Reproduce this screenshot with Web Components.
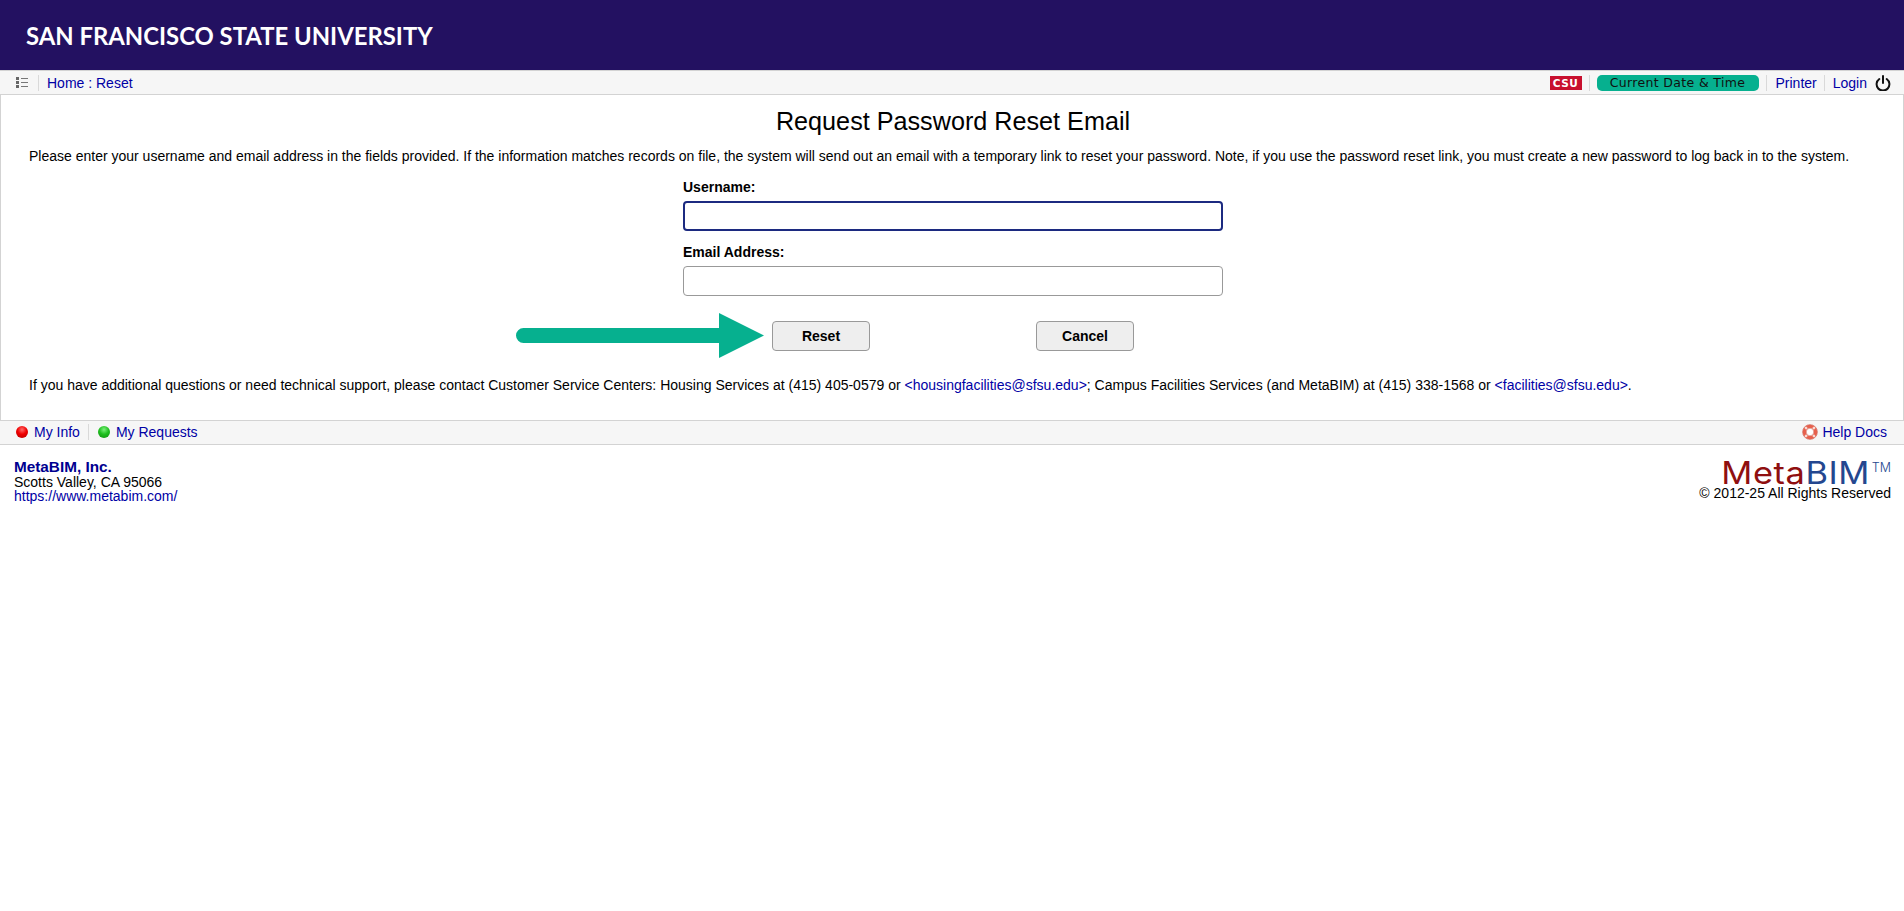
<!DOCTYPE html>
<html lang="en">
<head>
<meta charset="utf-8">
<title>Request Password Reset Email</title>
<style>
  html, body { margin: 0; padding: 0; background: #fff; }
  body { font: 14px/16px "Liberation Sans", Arial, sans-serif; color: #000; }
</style>
</head>
<body>
<site-banner>SAN FRANCISCO STATE UNIVERSITY</site-banner>
<top-bar></top-bar>
<reset-panel></reset-panel>
<bottom-bar></bottom-bar>
<site-footer></site-footer>

<script>
// --- Shared bits ---
const BAR_CSS = `
    :host { display: flex; align-items: center; justify-content: space-between; box-sizing: border-box; background: #f6f6f6; border-bottom: 1px solid #d3d3d3; font: 14px/16px "Liberation Sans", Arial, sans-serif; }
    a { color: #0000a5; text-decoration: none; }
    .group { display: flex; align-items: center; }
    .sep { width: 1px; height: 16px; background: #d9d9d9; }
`;

function mount(el, html) {
    el.attachShadow({ mode: 'open' }).innerHTML = html;
}

// --- Header ---
class SiteBanner extends HTMLElement {
    connectedCallback() {
        mount(this, `
            <style>
                :host { display: flex; align-items: center; box-sizing: border-box; height: 70px; padding: 2px 0 0 26px; background: #231161; color: #fff; font: 700 23.85px/30px Lato, sans-serif; }
            </style>
            <slot></slot>
        `);
    }
}
customElements.define('site-banner', SiteBanner);

// --- Top navigation bar ---
class TopBar extends HTMLElement {
    connectedCallback() {
        mount(this, `
            <style>
                ${BAR_CSS}
                :host { height: 25px; border-top: 1px solid #d3d3d3; }
                .list { margin-left: 16px; width: 12px; height: 11px; display: block; }
                .left .sep { margin: 0 8px 0 10px; }
                .csu { width: 32px; height: 14px; background: #c8102e; color: #fff; font: 700 10.5px/14px "DejaVu Sans", sans-serif; text-align: center; letter-spacing: .5px; }
                .clock { width: 162px; height: 16px; border-radius: 5px; background: #06b08f; color: #111; font: 12.5px/16px "DejaVu Sans", sans-serif; text-align: center; letter-spacing: .35px; }
                .right .sep { margin: 0 8px 0 7px; }
                .right .s1 { margin: 0 7px; }
                .right .s2 { margin: 0 9px 0 7px; }
                .power { display: block; width: 16px; height: 16px; margin: 0 13px 0 8px; }
            </style>
            <div class="group left">
                <svg class="list" viewBox="0 0 12 11" aria-hidden="true">
                    <g fill="#666"><rect x="0" y="0" width="3" height="3"/><rect x="0" y="4" width="3" height="3"/><rect x="0" y="8" width="3" height="3"/></g>
                    <g fill="#777"><rect x="5" y="1" width="7" height="1"/><rect x="5" y="5" width="7" height="1"/><rect x="5" y="9" width="7" height="1"/></g>
                </svg>
                <span class="sep"></span>
                <a href="#">Home : Reset</a>
            </div>
            <div class="group right">
                <span class="csu">CSU</span>
                <span class="sep s1"></span>
                <span class="clock">Current Date &amp; Time</span>
                <span class="sep s2"></span>
                <a href="#">Printer</a>
                <span class="sep"></span>
                <a href="#">Login</a>
                <svg class="power" viewBox="0 0 16 16" aria-hidden="true" fill="none" stroke="#111" stroke-width="2" stroke-linecap="round">
                    <path d="M8 1v7"/>
                    <path d="M4.3 4a6.4 6.4 0 1 0 7.4 0"/>
                </svg>
            </div>
        `);
    }
}
customElements.define('top-bar', TopBar);

// --- Reset form panel ---
class ResetPanel extends HTMLElement {
    connectedCallback() {
        mount(this, `
            <style>
                :host { display: block; box-sizing: border-box; height: 325px; padding: 0 28px; border-left: 1px solid #d3d3d3; border-right: 1px solid #d3d3d3; font: 14px/16px "Liberation Sans", Arial, sans-serif; }
                h1 { margin: 0; padding: 12px 0 0 2px; font: 400 25.2px/28px "Liberation Sans", Arial, sans-serif; text-align: center; }
                p { margin: 0; }
                .intro { margin-top: 13px; }
                form { width: 540px; margin: 15px auto 0; padding-left: 2px; }
                label { display: block; font-weight: 700; margin-bottom: 6px; }
                input { display: block; box-sizing: border-box; width: 100%; height: 30px; margin: 0 0 13px; border: 1px solid #999; border-radius: 4px; background: #fff; outline: none; }
                input.focus { border: 2px solid #1c2a80; }
                .actions { position: relative; display: flex; justify-content: center; gap: 166px; margin-top: 25px; }
                button { box-sizing: border-box; width: 98px; height: 30px; padding: 0; border: 1px solid #999; border-radius: 4px; background: #eee; color: #000; font: 700 14px/16px "Liberation Sans", Arial, sans-serif; }
                .arrow { position: absolute; left: -167px; top: -8px; width: 248px; height: 45px; display: block; }
                .contact { margin-top: 26px; }
                a { color: #0000a5; text-decoration: none; }
            </style>
            <h1>Request Password Reset Email</h1>
            <p class="intro">Please enter your username and email address in the fields provided. If the information matches records on file, the system will send out an email with a temporary link to reset your password. Note, if you use the password reset link, you must create a new password to log back in to the system.</p>
            <form>
                <label>Username:</label>
                <input class="focus" type="text">
                <label>Email Address:</label>
                <input type="text">
                <div class="actions">
                    <svg class="arrow" viewBox="0 0 248 45" aria-hidden="true">
                        <path fill="#06b08f" d="M7.5 15H203V0L248 22.5 203 45V30H7.5a7.5 7.5 0 0 1 0-15z"/>
                    </svg>
                    <button type="button">Reset</button>
                    <button type="button">Cancel</button>
                </div>
            </form>
            <p class="contact">If you have additional questions or need technical support, please contact Customer Service Centers: Housing Services at (415) 405-0579 or <a href="#">&lt;housingfacilities@sfsu.edu&gt;</a>; Campus Facilities Services (and MetaBIM) at (415) 338-1568 or <a href="#">&lt;facilities@sfsu.edu&gt;</a>.</p>
        `);
    }
}
customElements.define('reset-panel', ResetPanel);

// --- Bottom link bar ---
class BottomBar extends HTMLElement {
    connectedCallback() {
        mount(this, `
            <style>
                ${BAR_CSS}
                :host { height: 25px; padding-bottom: 2px; border-top: 1px solid #d3d3d3; }
                .dot { width: 12px; height: 12px; border-radius: 50%; margin-right: 6px; }
                .red { margin-left: 16px; background: radial-gradient(circle at 50% 30%, #ff6a6a 0, #f00000 45%, #b00000 100%); }
                .green { background: radial-gradient(circle at 50% 30%, #7cf07c 0, #20c020 45%, #0e8e0e 100%); }
                .sep { margin: 0 9px 0 8px; }
                .help { display: block; width: 16px; height: 16px; margin-right: 4px; }
                .right { padding-right: 17px; }
            </style>
            <div class="group">
                <span class="dot red"></span><a href="#">My Info</a>
                <span class="sep"></span>
                <span class="dot green"></span><a href="#">My Requests</a>
            </div>
            <div class="group right">
                <svg class="help" viewBox="0 0 16 16" aria-hidden="true">
                    <circle cx="8" cy="8" r="5.6" fill="#fff" stroke="#e8604c" stroke-width="3.4"/>
                    <path stroke="#f9dcd6" stroke-width="2.4" d="M3 3l1.9 1.9M13 3l-1.9 1.9M3 13l1.9-1.9M13 13l-1.9-1.9"/>
                    <circle cx="8" cy="8" r="7.4" fill="none" stroke="#d0695c" stroke-width=".7"/>
                    <circle cx="8" cy="8" r="3.8" fill="none" stroke="#d0695c" stroke-width=".6"/>
                </svg>
                <a href="#">Help Docs</a>
            </div>
        `);
    }
}
customElements.define('bottom-bar', BottomBar);

// --- Footer ---
class SiteFooter extends HTMLElement {
    connectedCallback() {
        mount(this, `
            <style>
                :host { display: flex; justify-content: space-between; padding: 15px 13px 0 14px; font: 14px/14.5px "Liberation Sans", Arial, sans-serif; }
                a { color: #0000a5; text-decoration: none; }
                b a { color: #000090; font-size: 15.3px; }
                .brand { text-align: right; }
                .logo { font: 400 31px/26px Inter, sans-serif; color: #8f0f10; letter-spacing: .5px; white-space: nowrap; }
                .word { display: inline-block; transform: scaleX(1.11); transform-origin: right center; }
                .word span { color: #24478f; }
                .logo sup { font-size: 12.5px; line-height: 0; vertical-align: 12px; color: #24478f; letter-spacing: 0; font-weight: 300; margin-left: 2px; }
            </style>
            <div>
                <b><a href="#">MetaBIM, Inc.</a></b><br>
                Scotts Valley, CA 95066<br>
                <a href="#">https://www.metabim.com/</a>
            </div>
            <div class="brand">
                <div class="logo"><span class="word">Meta<span>BIM</span></span><sup>TM</sup></div>
                © 2012-25 All Rights Reserved
            </div>
        `);
    }
}
customElements.define('site-footer', SiteFooter);
</script>
</body>
</html>
